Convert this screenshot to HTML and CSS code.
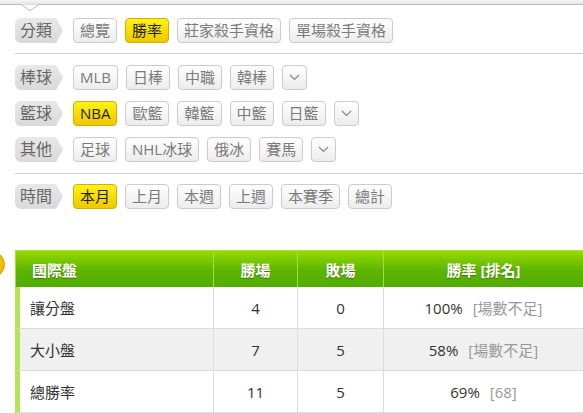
FILE: index.html
```html
<!DOCTYPE html>
<html lang="zh-Hant">
<head>
<meta charset="utf-8">
<title>勝率</title>
<link rel="stylesheet" href="styles.css">
</head>
<body>
<div class="topbar">
  <svg class="notch" width="18" height="8" viewBox="0 0 18 8"><polygon points="0,0.5 9,6.5 18,0.5" fill="#fff"/><polyline points="0,0.5 9,6.5 18,0.5" fill="none" stroke="#bbb" stroke-width="1"/></svg>
</div>
<div class="filters">
  <div class="group g1">
    <div class="row"><span class="tag">分類</span><span class="btn">總覽</span><span class="btn on">勝率</span><span class="btn">莊家殺手資格</span><span class="btn">單場殺手資格</span></div>
  </div>
  <div class="group">
    <div class="row"><span class="tag">棒球</span><span class="btn">MLB</span><span class="btn">日棒</span><span class="btn">中職</span><span class="btn">韓棒</span><span class="btn drop"><svg width="11" height="7" viewBox="0 0 11 7"><polyline points="1,1 5.5,5.5 10,1" fill="none" stroke="#888" stroke-width="1.2"/></svg></span></div>
    <div class="row"><span class="tag">籃球</span><span class="btn on">NBA</span><span class="btn">歐籃</span><span class="btn">韓籃</span><span class="btn">中籃</span><span class="btn">日籃</span><span class="btn drop"><svg width="11" height="7" viewBox="0 0 11 7"><polyline points="1,1 5.5,5.5 10,1" fill="none" stroke="#888" stroke-width="1.2"/></svg></span></div>
    <div class="row"><span class="tag">其他</span><span class="btn">足球</span><span class="btn">NHL冰球</span><span class="btn">俄冰</span><span class="btn">賽馬</span><span class="btn drop"><svg width="11" height="7" viewBox="0 0 11 7"><polyline points="1,1 5.5,5.5 10,1" fill="none" stroke="#888" stroke-width="1.2"/></svg></span></div>
  </div>
  <div class="group last">
    <div class="row"><span class="tag">時間</span><span class="btn on">本月</span><span class="btn">上月</span><span class="btn">本週</span><span class="btn">上週</span><span class="btn">本賽季</span><span class="btn">總計</span></div>
  </div>
</div>
<div class="board">
  <span class="pin"></span>
  <table class="stats">
    <thead>
      <tr><th class="c1">國際盤</th><th class="c2">勝場</th><th class="c3">敗場</th><th class="c4">勝率 [排名]</th></tr>
    </thead>
    <tbody>
      <tr><td class="name">讓分盤</td><td>4</td><td>0</td><td>100%<span class="muted">[場數不足]</span></td></tr>
      <tr class="alt"><td class="name">大小盤</td><td>7</td><td>5</td><td>58%<span class="muted">[場數不足]</span></td></tr>
      <tr><td class="name">總勝率</td><td>11</td><td>5</td><td>69%<span class="muted">[68]</span></td></tr>
    </tbody>
  </table>
</div>
</body>
</html>
```
FILE: styles.css
```css
* { box-sizing: border-box; }
html, body { margin: 0; padding: 0; background: #fff; }
body {
  font-family: "Open Sans", "Noto Sans CJK TC", sans-serif;
  color: #333;
  width: 583px;
  overflow: hidden;
}
.topbar {
  position: relative;
  height: 5px;
  background: linear-gradient(#f6f6f6, #e6e6e6);
  border-bottom: 1px solid #bdbdbd;
}
.notch {
  position: absolute;
  left: 21px;
  top: 3.5px;
}
.filters { margin-left: 15px; }
.group {
  display: flex;
  flex-direction: column;
  gap: 11px;
  padding: 11px 0;
  border-bottom: 1px solid #ccc;
}
.group.g1 { padding-top: 13px; padding-bottom: 10px; }
.group.last { border-bottom: none; padding-top: 10px; padding-bottom: 0; }
.row {
  display: flex;
  align-items: center;
  height: 25px;
}
.tag {
  width: 48px;
  height: 25px;
  padding-left: 5px;
  margin-right: 10px;
  font-size: 16px;
  line-height: 25px;
  color: #666;
  background: linear-gradient(#e8e8e8, #d9d9d9);
  border-radius: 6px 0 0 6px;
  clip-path: polygon(0 0, 41px 0, 48px 50%, 41px 100%, 0 100%);
}
.btn {
  height: 25px;
  padding: 0 6px;
  margin-right: 8px;
  border: 1px solid #cbcbcb;
  border-radius: 4px;
  background: linear-gradient(#ffffff, #ececec);
  color: #7a7a7a;
  font-size: 15px;
  line-height: 23px;
  white-space: nowrap;
}
.btn.on {
  background: linear-gradient(#fff31a, #f6d800 60%, #eec800);
  border-color: #d4ae00;
  color: #222;
}
.btn.drop {
  width: 25px;
  padding: 0;
  display: flex;
  align-items: center;
  justify-content: center;
}
.board {
  position: relative;
  margin-top: 41px;
  padding-left: 15px;
  overflow: hidden;
}
.pin {
  position: absolute;
  left: -22px;
  top: 1px;
  width: 27px;
  height: 27px;
  border-radius: 50%;
  background: radial-gradient(circle at 40% 40%, #f7d400, #e2b400);
  border: 1px solid #d0a000;
}
.stats {
  width: 568px;
  table-layout: fixed;
  border-collapse: separate;
  border-spacing: 0;
  font-size: 15px;
}
.stats th {
  height: 37px;
  padding: 0;
  color: #fff;
  font-weight: bold;
  text-align: center;
  background: linear-gradient(#96da00, #5cb400 55%, #52ad00);
  border-top: 1px solid #a6e030;
  border-right: 1px solid #a4dc48;
  text-shadow: 0 1px 1px rgba(0, 0, 0, 0.35);
}
.stats th.c1 {
  width: 199px;
  text-align: left;
  padding-left: 16px;
  border-left: 1px solid #a6e030;
}
.stats th.c2 { width: 84px; }
.stats th.c3 { width: 86px; }
.stats th.c4 { width: 199px; border-right: none; }
.stats td {
  height: 42px;
  padding: 0;
  text-align: center;
  color: #333;
  border-bottom: 1px solid #dcdcdc;
  border-right: 1px solid #dcdcdc;
}
.stats td:last-child { border-right: none; }
.stats td.name {
  text-align: left;
  padding-left: 10px;
  border-left: 5px solid #b4e45a;
}
.stats tr.alt td { background: #f0f0f0; }
.muted {
  color: #999;
  margin-left: 10px;
}
```
